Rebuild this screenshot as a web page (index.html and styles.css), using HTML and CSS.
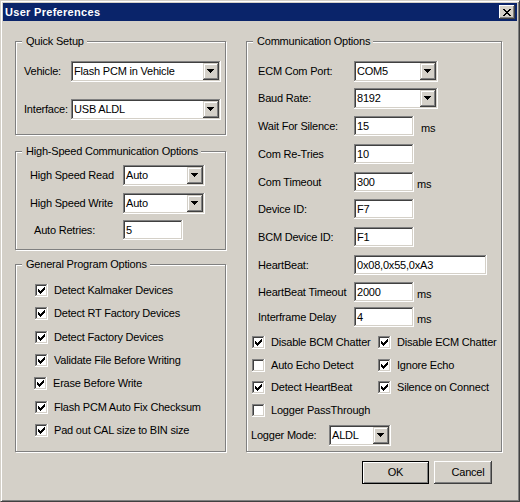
FILE: index.html
```html
<!DOCTYPE html>
<html lang="en">
<head>
<meta charset="utf-8">
<title>User Preferences</title>
<link rel="stylesheet" href="styles.css">
</head>
<body>
<svg class="defs" width="0" height="0" aria-hidden="true">
  <defs>
    <path id="chk" d="M9 3h1v1H9zM8 4h2v1H8zM3 5h1v1H3zM7 5h3v1H7zM3 6h2v1H3zM6 6h3v1H6zM3 7h5v1H3zM4 8h3v1H4zM5 9h1v1H5z"/>
    <path id="arr" d="M0 0h7v1H0zM1 1h5v1H1zM2 2h3v1H2zM3 3h1v1H3z"/>
  </defs>
</svg>
<div class="window">
  <div class="titlebar">
    <span class="title">User Preferences</span>
    <span class="close"><svg width="8" height="7" viewBox="0 0 8 7"><path d="M0 0h2v1H0zM6 0h2v1H6zM1 1h2v1H1zM5 1h2v1H5zM2 2h4v1H2zM3 3h2v1H3zM2 4h4v1H2zM1 5h2v1H1zM5 5h2v1H5zM0 6h2v1H0zM6 6h2v1H6z"/></svg></span>
  </div>
  <div class="client">
    <div class="cols">
      <div class="col-left">
        <div class="group g-quick">
          <span class="legend">Quick Setup</span>
          <div class="row mt13"><span class="lbl w-qs">Vehicle:</span><div class="combo w150"><span class="val">Flash PCM in Vehicle</span><span class="drop"><svg width="7" height="4"><use href="#arr"/></svg></span></div></div>
          <div class="row mt17"><span class="lbl w-qs">Interface:</span><div class="combo w150"><span class="val">USB ALDL</span><span class="drop"><svg width="7" height="4"><use href="#arr"/></svg></span></div></div>
        </div>
        <div class="group g-high">
          <span class="legend">High-Speed Communication Options</span>
          <div class="row mt7"><span class="lbl w-hs">High Speed Read</span><div class="combo w82"><span class="val">Auto</span><span class="drop"><svg width="7" height="4"><use href="#arr"/></svg></span></div></div>
          <div class="row mt7"><span class="lbl w-hs">High Speed Write</span><div class="combo w82"><span class="val">Auto</span><span class="drop"><svg width="7" height="4"><use href="#arr"/></svg></span></div></div>
          <div class="row mt6 retries"><span class="lbl w-ar">Auto Retries:</span><div class="input w60">5</div></div>
        </div>
        <div class="group g-gen">
          <span class="legend">General Program Options</span>
          <div class="gchecks">
            <div class="chk"><span class="cb"><svg width="13" height="13"><use href="#chk"/></svg></span><span>Detect Kalmaker Devices</span></div>
            <div class="chk"><span class="cb"><svg width="13" height="13"><use href="#chk"/></svg></span><span>Detect RT Factory Devices</span></div>
            <div class="chk"><span class="cb"><svg width="13" height="13"><use href="#chk"/></svg></span><span>Detect Factory Devices</span></div>
            <div class="chk"><span class="cb"><svg width="13" height="13"><use href="#chk"/></svg></span><span>Validate File Before Writing</span></div>
            <div class="chk nudge"><span class="cb"><svg width="13" height="13"><use href="#chk"/></svg></span><span>Erase Before Write</span></div>
            <div class="chk"><span class="cb"><svg width="13" height="13"><use href="#chk"/></svg></span><span>Flash PCM Auto Fix Checksum</span></div>
            <div class="chk"><span class="cb"><svg width="13" height="13"><use href="#chk"/></svg></span><span>Pad out CAL size to BIN size</span></div>
          </div>
        </div>
      </div>
      <div class="group g-comm">
        <span class="legend">Communication Options</span>
        <div class="row crow mt13"><span class="lbl w-c">ECM Com Port:</span><div class="combo w84"><span class="val">COM5</span><span class="drop"><svg width="7" height="4"><use href="#arr"/></svg></span></div></div>
        <div class="row crow mt6"><span class="lbl w-c">Baud Rate:</span><div class="combo w84"><span class="val">8192</span><span class="drop"><svg width="7" height="4"><use href="#arr"/></svg></span></div></div>
        <div class="row crow mt7"><span class="lbl w-c">Wait For Silence:</span><div class="input w60">15</div><span class="ms ms-wide">ms</span></div>
        <div class="row crow mt8"><span class="lbl w-c">Com Re-Tries</span><div class="input w60">10</div></div>
        <div class="row crow mt8"><span class="lbl w-c">Com Timeout</span><div class="input w60">300</div><span class="ms">ms</span></div>
        <div class="row crow mt7"><span class="lbl w-c">Device ID:</span><div class="input w60">F7</div></div>
        <div class="row crow mt8"><span class="lbl w-c">BCM Device ID:</span><div class="input w60">F1</div></div>
        <div class="row crow mt8"><span class="lbl w-c">HeartBeat:</span><div class="input w133">0x08,0x55,0xA3</div></div>
        <div class="row crow mt7"><span class="lbl w-c">HeartBeat Timeout</span><div class="input w60">2000</div><span class="ms">ms</span></div>
        <div class="row crow mt5"><span class="lbl w-c">Interframe Delay</span><div class="input w60">4</div><span class="ms">ms</span></div>
        <div class="cchecks">
          <div class="chk"><span class="cb"><svg width="13" height="13"><use href="#chk"/></svg></span><span>Disable BCM Chatter</span></div>
          <div class="chk"><span class="cb"><svg width="13" height="13"><use href="#chk"/></svg></span><span>Disable ECM Chatter</span></div>
          <div class="chk"><span class="cb"></span><span>Auto Echo Detect</span></div>
          <div class="chk"><span class="cb"><svg width="13" height="13"><use href="#chk"/></svg></span><span>Ignore Echo</span></div>
          <div class="chk"><span class="cb"><svg width="13" height="13"><use href="#chk"/></svg></span><span>Detect HeartBeat</span></div>
          <div class="chk"><span class="cb"><svg width="13" height="13"><use href="#chk"/></svg></span><span>Silence on Connect</span></div>
          <div class="chk"><span class="cb"></span><span>Logger PassThrough</span></div>
        </div>
        <div class="row logger mt8"><span class="lbl w-lm">Logger Mode:</span><div class="combo w62"><span class="val">ALDL</span><span class="drop"><svg width="7" height="4"><use href="#arr"/></svg></span></div></div>
      </div>
    </div>
    <div class="buttons">
      <div class="btn btn-ok">OK</div>
      <div class="btn btn-cancel">Cancel</div>
    </div>
  </div>
</div>
</body>
</html>
```
FILE: styles.css
```css
* { box-sizing: border-box; }
html, body { margin: 0; padding: 0; }
body {
  background: #d4d0c8;
  font-family: "Liberation Sans", Arial, sans-serif;
  font-size: 11px;
  line-height: 13px;
  color: #000;
  letter-spacing: -0.2px;
}
.defs { position: absolute; width: 0; height: 0; overflow: hidden; }
svg { display: block; }

.window {
  width: 520px;
  height: 502px;
  background: #d4d0c8;
  border: 1px solid;
  border-color: #d4d0c8 #404040 #404040 #d4d0c8;
  box-shadow: inset 1px 1px #fff, inset -1px -1px #808080;
  padding: 2px;
  display: flex;
  flex-direction: column;
}
.titlebar {
  height: 18px;
  flex: none;
  background: #0a246a;
  color: #fff;
  display: flex;
  align-items: center;
  justify-content: space-between;
  padding: 0 2px;
}
.title { font-weight: bold; letter-spacing: 0.3px; line-height: 18px; }
.close {
  width: 16px;
  height: 14px;
  background: #d4d0c8;
  box-shadow: inset -1px -1px #404040, inset 1px 1px #fff, inset -2px -2px #808080;
  padding: 4px 0 0 4px;
}

.client { display: flex; flex-direction: column; padding: 20px 0 0 12px; }
.cols { display: flex; gap: 20px; align-items: flex-start; }
.col-left { display: flex; flex-direction: column; width: 211px; }

.group {
  border: 1px solid #808080;
  box-shadow: inset 1px 1px #fff, 1px 1px #fff;
  display: flex;
  flex-direction: column;
  flex: none;
}
.legend {
  align-self: flex-start;
  margin: -7px 0 0 6px;
  padding: 0 3px 0 4px;
  background: #d4d0c8;
  height: 13px;
  white-space: nowrap;
}
.g-quick { height: 94px; }
.g-high { height: 99px; margin-top: 16px; }
.g-gen { height: 188px; margin-top: 14px; }
.g-comm { width: 256px; height: 411px; }

.row { display: flex; align-items: center; flex: none; }
.lbl { white-space: nowrap; flex: none; }
.mt5 { margin-top: 5px; }
.mt6 { margin-top: 6px; }
.mt7 { margin-top: 7px; }
.mt8 { margin-top: 8px; }
.mt13 { margin-top: 13px; }
.mt17 { margin-top: 17px; }

.g-quick .row { padding-left: 8px; }
.w-qs { width: 47px; }
.g-high .row { padding-left: 14px; }
.w-hs { width: 93px; }
.g-high .retries { padding-left: 18px; }
.w-ar { width: 89px; }
.crow { padding-left: 11px; }
.w-c { width: 96px; }
.logger { padding-left: 4px; }
.w-lm { width: 78px; }

.w150 { width: 150px; }
.w82 { width: 82px; }
.w84 { width: 84px; }
.w62 { width: 62px; }
.w60 { width: 60px; }
.w133 { width: 133px; }

.combo, .input, .cb {
  background: #fff;
  box-shadow: inset -1px -1px #fff, inset 1px 1px #808080, inset -2px -2px #d4d0c8, inset 2px 2px #404040;
}
.combo {
  height: 21px;
  padding: 2px;
  display: flex;
  flex: none;
}
.combo .val {
  flex: 1;
  min-width: 0;
  padding-left: 1px;
  align-self: center;
  white-space: nowrap;
  overflow: hidden;
}
.drop {
  width: 16px;
  height: 17px;
  flex: none;
  background: #d4d0c8;
  box-shadow: inset -1px -1px #404040, inset 1px 1px #d4d0c8, inset -2px -2px #808080, inset 2px 2px #fff;
  padding: 6px 0 0 4px;
}
.input {
  height: 20px;
  padding: 2px 2px 2px 3px;
  display: flex;
  align-items: center;
  flex: none;
  white-space: nowrap;
}
.ms { margin-left: 3px; padding-top: 4px; }
.ms-wide { margin-left: 7px; }

.cb { width: 13px; height: 13px; flex: none; }
.chk { display: flex; align-items: center; gap: 6px; white-space: nowrap; }
.chk.nudge { margin-left: -1px; }
.gchecks {
  display: grid;
  grid-auto-rows: 13px;
  row-gap: 10.33px;
  margin-top: 13px;
  padding-left: 19px;
}
.cchecks {
  display: grid;
  grid-template-columns: 126px 126px;
  grid-auto-rows: 13px;
  row-gap: 9.67px;
  margin-top: 9px;
  padding-left: 5px;
}

.buttons {
  display: flex;
  justify-content: flex-end;
  gap: 5px;
  margin-top: 9px;
  padding-right: 25px;
}
.btn {
  height: 23px;
  display: flex;
  align-items: center;
  justify-content: center;
  background: #d4d0c8;
}
.btn-ok {
  width: 67px;
  border: 1px solid #000;
  box-shadow: inset 1px 1px #fff, inset -1px -1px #808080;
}
.btn-cancel {
  width: 58px;
  padding-left: 10px;
  box-shadow: inset -1px -1px #404040, inset 1px 1px #fff, inset -2px -2px #808080;
}
```
